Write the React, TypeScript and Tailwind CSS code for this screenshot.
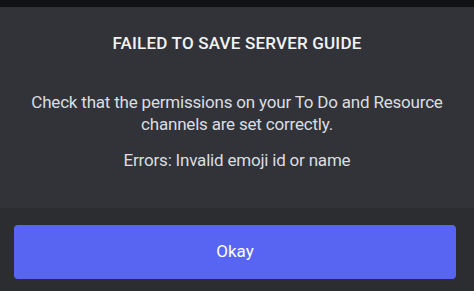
import React from 'react';

const App: React.FC = () => {
  return (
    <div
      className="w-[474px] h-[291px] flex flex-col bg-[#313338] overflow-hidden"
      style={{ fontFamily: 'Roboto, "Noto Sans", sans-serif' }}
    >
      <div className="h-[7px] bg-[#111214] shrink-0" />
      <div className="flex-1 flex flex-col items-center text-center">
        <h2 className="mt-[25px] text-[17px] leading-[22px] font-medium text-[#f2f3f5] tracking-[0.2px]">
          FAILED TO SAVE SERVER GUIDE
        </h2>
        <p className="mt-[37px] text-[17px] leading-[22px] tracking-[-0.2px] text-[#dbdee1] whitespace-nowrap">
          Check that the permissions on your To Do and Resource
          <br />
          channels are set correctly.
        </p>
        <p className="mt-[14px] text-[17px] leading-[22px] tracking-[-0.2px] text-[#dbdee1]">
          Errors: Invalid emoji id or name
        </p>
      </div>
      <div className="h-[83px] shrink-0 bg-[#2b2d31] pt-[17px] pl-[14px] pr-[18px]">
        <button className="w-full h-[54px] rounded-[4px] bg-[#5865f2] text-[17px] text-white">
          Okay
        </button>
      </div>
    </div>
  );
};

export default App;
